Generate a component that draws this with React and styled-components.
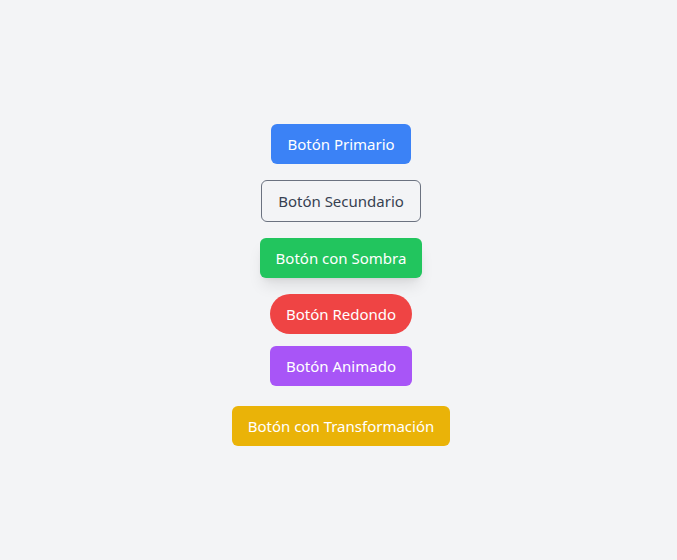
import React from "react";
import styled, { createGlobalStyle, css } from "styled-components";

const GlobalStyle = createGlobalStyle`
  html, body {
    margin: 0;
    padding: 0;
    background: #f3f4f6;
  }
  body {
    font-family: "Noto Sans", "Open Sans", sans-serif;
  }
`;

const Page = styled.div`
  min-height: 560px;
  box-sizing: border-box;
  padding: 124px 0 0 5px;
  display: flex;
  flex-direction: column;
  align-items: center;
  gap: 16px;
`;

const COLORS = {
  primary: "#3b82f6",
  shadow: "#22c55e",
  round: "#ef4444",
  animated: "#a855f7",
  transform: "#eab308",
};

const Button = styled.button`
  font-family: "Noto Sans", "Open Sans", sans-serif;
  font-size: 15px;
  line-height: 24px;
  padding: 8px 16px;
  border: none;
  border-radius: 6px;
  color: #ffffff;
  background: ${(p) => COLORS[p.variant] || "transparent"};
  cursor: pointer;

  ${(p) =>
    p.variant === "secondary" &&
    css`
      border: 1px solid #6b7280;
      color: #374151;
    `}

  ${(p) =>
    p.variant === "shadow" &&
    css`
      box-shadow: 0 10px 15px -3px rgba(0, 0, 0, 0.1),
        0 4px 6px -4px rgba(0, 0, 0, 0.1);
    `}

  ${(p) =>
    p.variant === "round" &&
    css`
      border-radius: 9999px;
    `}

  ${(p) =>
    p.variant === "animated" &&
    css`
      transform: translateY(-4px);
    `}
`;

const App = () => {
  return (
    <>
      <GlobalStyle />
      <Page>
        <Button variant="primary">Botón Primario</Button>
        <Button variant="secondary">Botón Secundario</Button>
        <Button variant="shadow">Botón con Sombra</Button>
        <Button variant="round">Botón Redondo</Button>
        <Button variant="animated">Botón Animado</Button>
        <Button variant="transform">Botón con Transformación</Button>
      </Page>
    </>
  );
};

export default App;
